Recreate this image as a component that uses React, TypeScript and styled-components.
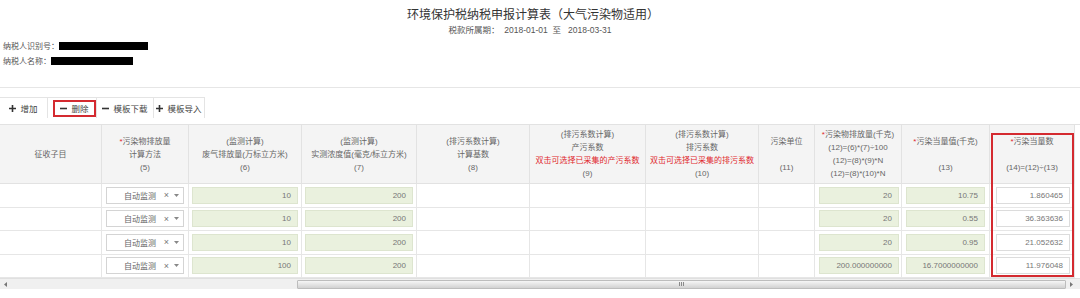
import React from "react";
import styled, { createGlobalStyle } from "styled-components";

const GlobalStyle = createGlobalStyle`
    html, body {
        margin: 0;
        padding: 0;
        background: #ffffff;
    }
    body {
        font-family: "Liberation Sans", "Noto Sans CJK SC", sans-serif;
        color: #555;
    }
`

const Page = styled.div`
    width: 1080px;
    height: 298px;
    overflow: hidden;
    background: #fff;
`

const Head = styled.div`
    box-sizing: border-box;
    height: 88px;
    padding-top: 6px;
    border-bottom: 1px solid #e6e6e6;
`

const Title = styled.h1`
    margin: 0;
    padding-right: 14px;
    font-size: 12px;
    line-height: 16px;
    font-weight: normal;
    color: #333;
    text-align: center;
    font-family: "Noto Sans CJK SC", sans-serif;
`

const Period = styled.div`
    margin-top: 1px;
    padding-right: 20px;
    font-size: 8.5px;
    line-height: 14px;
    color: #555;
    text-align: center;
    white-space: pre;
`

const InfoList = styled.div`
    margin-top: 1px;
    padding-left: 3px;
    display: flex;
    flex-direction: column;
`

const InfoRow = styled.div`
    display: flex;
    align-items: center;
    height: 15px;
    font-size: 8px;
    color: #555;
`

const Mask = styled.span<{ $w: number }>`
    display: inline-block;
    width: ${p => p.$w}px;
    height: 8px;
    background: #000;
`

const Toolbar = styled.div`
    display: flex;
    height: 36px;
    padding-top: 9px;
    box-sizing: border-box;
`

const ToolButton = styled.div<{ $w: number; $start?: boolean }>`
    box-sizing: border-box;
    width: ${p => p.$w}px;
    height: 21px;
    display: flex;
    align-items: center;
    justify-content: ${p => (p.$start ? "flex-start" : "center")};
    gap: 4px;
    border-top: 1px solid #e4e4e4;
    border-right: 1px solid #e4e4e4;
    font-size: 8.5px;
    color: #444;
`

const RedMark = styled.span`
    box-sizing: border-box;
    margin-left: 5px;
    width: 43px;
    height: 17px;
    display: flex;
    align-items: center;
    justify-content: center;
    gap: 4px;
    border: 2px solid #d42a30;
`

const TableWrap = styled.div`
    position: relative;
    width: 1080px;
`

const Grid = styled.div`
    display: grid;
    grid-template-columns: 102px 87px 113px 115px 113px 116px 113px 56px 87px 88px 85px;
    grid-template-rows: 59px repeat(4, 23.5px);
    border-top: 1px solid #e2e2e2;
    box-sizing: border-box;
`

const HeadCell = styled.div`
    box-sizing: border-box;
    display: flex;
    flex-direction: column;
    align-items: center;
    justify-content: center;
    background: #f4f4f4;
    border-right: 1px solid #e2e2e2;
    border-bottom: 1px solid #e2e2e2;
    font-size: 8px;
    line-height: 13px;
    color: #666;
    text-align: center;
    white-space: nowrap;
`

const HeadLine = styled.span<{ $red?: boolean }>`
    color: ${p => (p.$red ? "#e0282e" : "#666")};
`

const Star = styled.span`
    color: #e0282e;
`

const Cell = styled.div<{ $pl?: number; $pr?: number }>`
    box-sizing: border-box;
    display: flex;
    align-items: center;
    padding: 0 ${p => p.$pr ?? 3}px 0 ${p => p.$pl ?? 3}px;
    border-right: 1px solid #e6e6e6;
    border-bottom: 1px solid #e6e6e6;
    background: #fff;
`

const NumBox = styled.div<{ $green?: boolean }>`
    box-sizing: border-box;
    flex: 1;
    height: 17px;
    display: flex;
    align-items: center;
    justify-content: flex-end;
    padding-right: 6px;
    background: ${p => (p.$green ? "#eaf1de" : "#ffffff")};
    border: 1px solid ${p => (p.$green ? "#dde5cf" : "#dcdcdc")};
    font-size: 8px;
    color: #777;
`

const SelectBox = styled.div`
    box-sizing: border-box;
    flex: 1;
    height: 17px;
    display: flex;
    align-items: center;
    padding: 0 4px 0 17px;
    background: #fff;
    border: 1px solid #d4d4d4;
    font-size: 8px;
    color: #666;
`

const SelectText = styled.span`
    flex: 1;
`

const Clear = styled.span`
    font-size: 9px;
    color: #777;
    margin-right: 5px;
`

const RedFrame = styled.div`
    position: absolute;
    top: 9px;
    left: 991px;
    width: 83px;
    height: 144px;
    box-sizing: border-box;
    border: 2px solid #d42a30;
    pointer-events: none;
`

const ScrollBar = styled.div`
    display: flex;
    align-items: center;
    height: 11px;
    background: #f0f0f0;
    border-top: 1px solid #e0e0e0;
    box-sizing: border-box;
`

const Arrow = styled.div`
    width: 10px;
    display: flex;
    align-items: center;
    justify-content: center;
`

const Track = styled.div`
    width: 287px;
    height: 100%;
`

const Thumb = styled.div`
    box-sizing: border-box;
    width: 769px;
    height: 9px;
    display: flex;
    align-items: center;
    justify-content: center;
    gap: 1px;
    background: linear-gradient(#f6f6f6, #d2d2d2);
    border: 1px solid #bdbdbd;
    border-radius: 1px;
`

const Grip = styled.span`
    width: 1px;
    height: 4px;
    background: #8a8a8a;
`

const Plus = () => (
    <svg width="7" height="7" viewBox="0 0 7 7">
        <path d="M3.5 0v7M0 3.5h7" stroke="#333" strokeWidth="1.6" />
    </svg>
)

const Minus = () => (
    <svg width="7" height="7" viewBox="0 0 7 7">
        <path d="M0 3.5h7" stroke="#333" strokeWidth="1.6" />
    </svg>
)

const heads: string[][] = [
    ["征收子目"],
    ["*污染物排放量", "计算方法", "(5)"],
    ["(监测计算)", "废气排放量(万标立方米)", "(6)"],
    ["(监测计算)", "实测浓度值(毫克/标立方米)", "(7)"],
    ["(排污系数计算)", "计算基数", "(8)"],
    ["(排污系数计算)", "产污系数", "!双击可选择已采集的产污系数", "(9)"],
    ["(排污系数计算)", "排污系数", "!双击可选择已采集的排污系数", "(10)"],
    ["污染单位", "", "(11)"],
    ["*污染物排放量(千克)", "(12)=(6)*(7)÷100", "(12)=(8)*(9)*N", "(12)=(8)*(10)*N"],
    ["*污染当量值(千克)", "", "(13)"],
    ["*污染当量数", "", "(14)=(12)÷(13)"],
]

const rows = [
    { gas: "10", conc: "200", amount: "20", unit: "10.75", count: "1.860465" },
    { gas: "10", conc: "200", amount: "20", unit: "0.55", count: "36.363636" },
    { gas: "10", conc: "200", amount: "20", unit: "0.95", count: "21.052632" },
    { gas: "100", conc: "200", amount: "200.000000000", unit: "16.7000000000", count: "11.976048" },
]

const renderLine = (line: string, i: number) => {
    if (line === "") return <HeadLine key={i}>&nbsp;</HeadLine>
    if (line.startsWith("!")) return <HeadLine key={i} $red>{line.slice(1)}</HeadLine>
    if (line.startsWith("*")) return <HeadLine key={i}><Star>*</Star>{line.slice(1)}</HeadLine>
    return <HeadLine key={i}>{line}</HeadLine>
}

const App: React.FC = () => {
    return (
        <Page>
            <GlobalStyle />
            <Head>
                <Title>环境保护税纳税申报计算表（大气污染物适用）</Title>
                <Period>{"税款所属期：  2018-01-01  至   2018-03-31"}</Period>
                <InfoList>
                    <InfoRow>纳税人识别号：<Mask $w={89} /></InfoRow>
                    <InfoRow>纳税人名称：<Mask $w={82} /></InfoRow>
                </InfoList>
            </Head>

            <Toolbar>
                <ToolButton $w={48}><Plus />增加</ToolButton>
                <ToolButton $w={49} $start>
                    <RedMark><Minus />删除</RedMark>
                </ToolButton>
                <ToolButton $w={57}><Minus />模板下载</ToolButton>
                <ToolButton $w={51}><Plus />模板导入</ToolButton>
            </Toolbar>

            <TableWrap>
                <Grid>
                    {heads.map((lines, i) => (
                        <HeadCell key={i}>{lines.map(renderLine)}</HeadCell>
                    ))}
                    {rows.map((r, i) => (
                        <React.Fragment key={i}>
                            <Cell />
                            <Cell $pl={4} $pr={4}>
                                <SelectBox>
                                    <SelectText>自动监测</SelectText>
                                    <Clear>×</Clear>
                                    <svg width="5" height="3" viewBox="0 0 5 3">
                                        <path d="M0 0h5L2.5 3z" fill="#888" />
                                    </svg>
                                </SelectBox>
                            </Cell>
                            <Cell><NumBox $green>{r.gas}</NumBox></Cell>
                            <Cell><NumBox $green>{r.conc}</NumBox></Cell>
                            <Cell />
                            <Cell />
                            <Cell />
                            <Cell />
                            <Cell $pl={4} $pr={2}><NumBox $green>{r.amount}</NumBox></Cell>
                            <Cell $pl={4} $pr={4}><NumBox $green>{r.unit}</NumBox></Cell>
                            <Cell $pl={6} $pr={4}><NumBox>{r.count}</NumBox></Cell>
                        </React.Fragment>
                    ))}
                </Grid>
                <RedFrame />
                <ScrollBar>
                    <Arrow>
                        <svg width="3" height="5" viewBox="0 0 3 5"><path d="M3 0v5L0 2.5z" fill="#777" /></svg>
                    </Arrow>
                    <Track />
                    <Thumb><Grip /><Grip /><Grip /></Thumb>
                    <Arrow>
                        <svg width="3" height="5" viewBox="0 0 3 5"><path d="M0 0v5L3 2.5z" fill="#777" /></svg>
                    </Arrow>
                </ScrollBar>
            </TableWrap>
        </Page>
    )
}

export default App;
